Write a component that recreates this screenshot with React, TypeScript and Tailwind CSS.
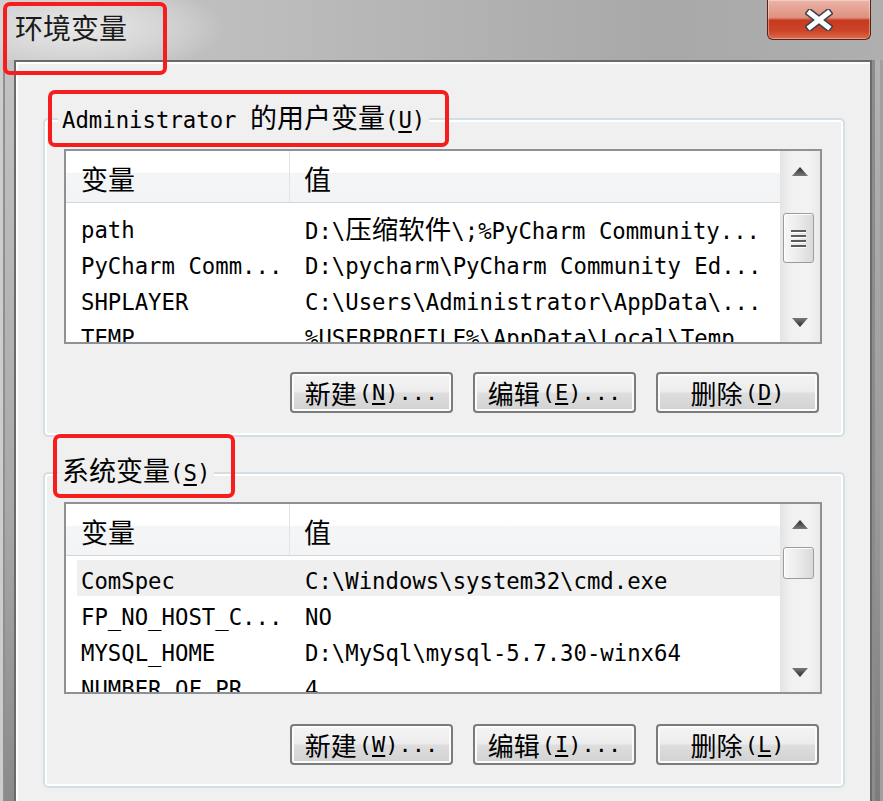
import React from "react";

const MONO = "font-['DejaVu_Sans_Mono','Noto_Sans_CJK_SC',monospace]";
const CJK = "font-['Noto_Sans_CJK_SC',sans-serif]";

function isCJK(ch: string) {
  return /[\u3000-\u9fff\uff00-\uffef]/.test(ch);
}

function Mixed({ text, cjkClass }: { text: string; cjkClass: string }) {
  const runs: { t: string; cjk: boolean }[] = [];
  for (const ch of text) {
    const c = isCJK(ch);
    const last = runs[runs.length - 1];
    if (last && last.cjk === c) last.t += ch;
    else runs.push({ t: ch, cjk: c });
  }
  return (
    <>
      {runs.map((r, i) =>
        r.cjk ? (
          <span key={i} className={cjkClass}>
            {r.t}
          </span>
        ) : (
          <span key={i}>{r.t}</span>
        )
      )}
    </>
  );
}

type RowT = { name: string; value: string; selected?: boolean };

function Header() {
  return (
    <div className={`flex h-[52px] shrink-0 border-b border-[#d5d5d5] bg-[linear-gradient(to_bottom,#ffffff_0%,#ffffff_42%,#f4f5f7_43%,#f3f4f6_100%)] ${CJK} text-[27px] text-black`}>
      <div className="w-[224px] border-r border-[#e2e3e6] pl-[15px] pt-[5px] flex items-center">变量</div>
      <div className="pl-[14px] pt-[5px] flex items-center">值</div>
    </div>
  );
}

function Row({ r }: { r: RowT }) {
  return (
    <div className={`flex h-[36px] items-center pt-[5px] ml-[11px] whitespace-nowrap ${r.selected ? "bg-[#efefef]" : ""}`}>
      <div className="w-[213px] pl-[4px] overflow-hidden">{r.name}</div>
      <div className="pl-[15px]">
        <Mixed text={r.value} cjkClass={`${CJK} text-[26.5px]`} />
      </div>
    </div>
  );
}

function UpArrow() {
  return (
    <svg width="16" height="9" viewBox="0 0 16 9">
      <defs>
        <linearGradient id="ua" x1="0" y1="0" x2="0" y2="1">
          <stop offset="0" stopColor="#2a2a2a" />
          <stop offset="1" stopColor="#7a7a7a" />
        </linearGradient>
      </defs>
      <polygon points="0,9 8,0 16,9" fill="url(#ua)" />
    </svg>
  );
}

function DownArrow() {
  return (
    <svg width="16" height="9" viewBox="0 0 16 9">
      <defs>
        <linearGradient id="da" x1="0" y1="0" x2="0" y2="1">
          <stop offset="0" stopColor="#7a7a7a" />
          <stop offset="1" stopColor="#2a2a2a" />
        </linearGradient>
      </defs>
      <polygon points="0,0 16,0 8,9" fill="url(#da)" />
    </svg>
  );
}

function ListBox({
  hClass,
  padClass,
  thumbClass,
  grip,
  rows,
}: {
  hClass: string;
  padClass: string;
  thumbClass: string;
  grip: boolean;
  rows: RowT[];
}) {
  return (
    <div className={`w-[758px] ${hClass} border-2 border-[#8d9297] bg-white flex overflow-hidden`}>
      <div className="flex-1 min-w-0 flex flex-col overflow-hidden">
        <Header />
        <div className={`${padClass} ${MONO} text-[22.3px] leading-[36px] text-black`}>
          {rows.map((r, i) => (
            <Row key={i} r={r} />
          ))}
        </div>
      </div>
      <div className="w-[40px] shrink-0 flex flex-col bg-[linear-gradient(to_right,#e4e4e4_0%,#f1f1f1_30%,#f3f3f3_70%,#eaeaea_100%)]">
        <div className="h-[40px] shrink-0 flex items-center justify-center">
          <UpArrow />
        </div>
        <div
          className={`${thumbClass} shrink-0 ml-[3px] w-[31px] rounded-[3px] border border-[#9c9c9c] bg-[linear-gradient(to_right,#f8f8f8_0%,#ececec_45%,#d9d9d9_100%)] shadow-[inset_1px_1px_0_#ffffff] flex flex-col items-center justify-center gap-[3px]`}
        >
          {grip && (
            <>
              <div className="w-[15px] h-[2px] bg-[#5c5c5c] shadow-[0_1px_0_#ffffff]" />
              <div className="w-[15px] h-[2px] bg-[#5c5c5c] shadow-[0_1px_0_#ffffff]" />
              <div className="w-[15px] h-[2px] bg-[#5c5c5c] shadow-[0_1px_0_#ffffff]" />
              <div className="w-[15px] h-[2px] bg-[#5c5c5c] shadow-[0_1px_0_#ffffff]" />
            </>
          )}
        </div>
        <div className="flex-1" />
        <div className="h-[40px] shrink-0 flex items-center justify-center">
          <DownArrow />
        </div>
      </div>
    </div>
  );
}

function Btn({ cjk, k, dots }: { cjk: string; k: string; dots: boolean }) {
  return (
    <div className="w-[163px] h-[41px] rounded-[4px] border-2 border-[#7b7b7b] bg-[linear-gradient(to_bottom,#f4f4f4_0%,#ececec_48%,#dedede_52%,#d1d1d1_100%)] shadow-[inset_0_0_0_2px_#fbfbfb] flex items-center justify-center text-black whitespace-nowrap">
      <span className={`${CJK} text-[26px] leading-none`}>{cjk}</span>
      <span className={`${MONO} text-[22px] leading-none ml-[2px]`}>
        (<span className="underline underline-offset-[3px]">{k}</span>){dots ? "..." : ""}
      </span>
    </div>
  );
}

const rows1: RowT[] = [
  { name: "path", value: "D:\\压缩软件\\;%PyCharm Community..." },
  { name: "PyCharm Comm...", value: "D:\\pycharm\\PyCharm Community Ed..." },
  { name: "SHPLAYER", value: "C:\\Users\\Administrator\\AppData\\..." },
  { name: "TEMP", value: "%USERPROFILE%\\AppData\\Local\\Temp" },
];

const rows2: RowT[] = [
  { name: "ComSpec", value: "C:\\Windows\\system32\\cmd.exe", selected: true },
  { name: "FP_NO_HOST_C...", value: "NO" },
  { name: "MYSQL_HOME", value: "D:\\MySql\\mysql-5.7.30-winx64" },
  { name: "NUMBER_OF_PR...", value: "4" },
];

export default function App() {
  return (
    <div className="relative w-[883px] h-[801px] overflow-hidden flex flex-col bg-[#b3b3b3] text-black">
      {/* title bar */}
      <div className="h-[60px] shrink-0 flex justify-between bg-[radial-gradient(ellipse_150px_48px_at_75px_28px,#e9e9e9_0%,#d6d6d6_55%,rgba(214,214,214,0)_100%),linear-gradient(to_right,#c8c8c8_0%,#bababa_35%,#a8a8a8_75%,#afafaf_100%)]">
        <div className={`pl-[15px] pt-[9px] ${CJK} text-[28px] leading-[36px] text-[#1b1b1b]`}>环境变量</div>
        <div className="mr-[12px] w-[104px] h-[40px] rounded-b-[6px] border border-t-0 border-[#5a2018] bg-[linear-gradient(to_bottom,#ebb4a7_0%,#df917f_45%,#c73a20_52%,#cc4528_80%,#de6c4c_100%)] shadow-[inset_0_0_0_1px_rgba(255,255,255,0.35)] flex items-center justify-center">
          <svg width="28" height="22" viewBox="0 0 28 22">
            <g strokeLinecap="square">
              <line x1="5" y1="4" x2="23" y2="18" stroke="#3a4250" strokeWidth="8" />
              <line x1="23" y1="4" x2="5" y2="18" stroke="#3a4250" strokeWidth="8" />
              <line x1="5" y1="4" x2="23" y2="18" stroke="#ffffff" strokeWidth="5" />
              <line x1="23" y1="4" x2="5" y2="18" stroke="#ffffff" strokeWidth="5" />
            </g>
          </svg>
        </div>
      </div>

      <div className="flex flex-1 min-h-0">
        {/* left frame */}
        <div className="w-[14px] shrink-0 border-l-[3px] border-[#cdcdcd] bg-[linear-gradient(to_bottom,#c3c3c3_0%,#a9a9a9_60%,#8a8a8a_100%)] shadow-[inset_2px_0_0_#8f8f8f]" />
        {/* client */}
        <div className="w-[858px] shrink-0 border-2 border-b-0 border-[#6a6a6a] bg-[#f0f0f0] shadow-[inset_2px_2px_0_#ffffff] pl-[27px] pt-[56px]">
          {/* group 1 */}
          <div className="relative w-[802px] h-[319px] rounded-[5px] border-2 border-[#d3dee5] shadow-[inset_0_0_0_2px_#ffffff] pt-[29px] pl-[19px]">
            <div className={`absolute left-[13px] top-[-18px] h-[30px] px-[4px] bg-[#f0f0f0] ${MONO} text-[22.3px] leading-[30px] whitespace-nowrap`}>
              Administrator <span className={`${CJK} text-[27px]`}>的用户变量</span>(<span className="underline underline-offset-[3px]">U</span>)
            </div>
            <ListBox hClass="h-[195px]" padClass="pt-[6px]" thumbClass="mt-[22px] h-[50px]" grip rows={rows1} />
            <div className="mt-[28px] flex justify-end gap-[20px] pr-[24px]">
              <Btn cjk="新建" k="N" dots />
              <Btn cjk="编辑" k="E" dots />
              <Btn cjk="删除" k="D" dots={false} />
            </div>
          </div>

          {/* group 2 */}
          <div className="relative mt-[35px] w-[802px] h-[316px] rounded-[5px] border-2 border-[#d3dee5] shadow-[inset_0_0_0_2px_#ffffff] pt-[28px] pl-[19px]">
            <div className={`absolute left-[13px] top-[-19px] h-[30px] px-[4px] bg-[#f0f0f0] ${MONO} text-[22.3px] leading-[30px] whitespace-nowrap`}>
              <span className={`${CJK} text-[27px]`}>系统变量</span>(<span className="underline underline-offset-[3px]">S</span>)
            </div>
            <ListBox hClass="h-[192px]" padClass="pt-[4px]" thumbClass="mt-[3px] h-[32px]" grip={false} rows={rows2} />
            <div className="mt-[30px] flex justify-end gap-[20px] pr-[24px]">
              <Btn cjk="新建" k="W" dots />
              <Btn cjk="编辑" k="I" dots />
              <Btn cjk="删除" k="L" dots={false} />
            </div>
          </div>
        </div>
        {/* right frame */}
        <div className="flex-1 border-l-[3px] border-[#8c8c8c] bg-[linear-gradient(to_bottom,#b4b4b4_0%,#9a9a9a_60%,#7c7c7c_100%)] shadow-[inset_-3px_0_0_#a0a0a0]" />
      </div>

      {/* red annotation boxes */}
      <div className="absolute left-[3px] top-[2px] w-[164px] h-[73px] rounded-[7px] border-[4px] border-[#f51d1d]" />
      <div className="absolute left-[48px] top-[90px] w-[401px] h-[57px] rounded-[7px] border-[4px] border-[#f51d1d]" />
      <div className="absolute left-[53px] top-[434px] w-[182px] h-[64px] rounded-[7px] border-[4px] border-[#f51d1d]" />
    </div>
  );
}
